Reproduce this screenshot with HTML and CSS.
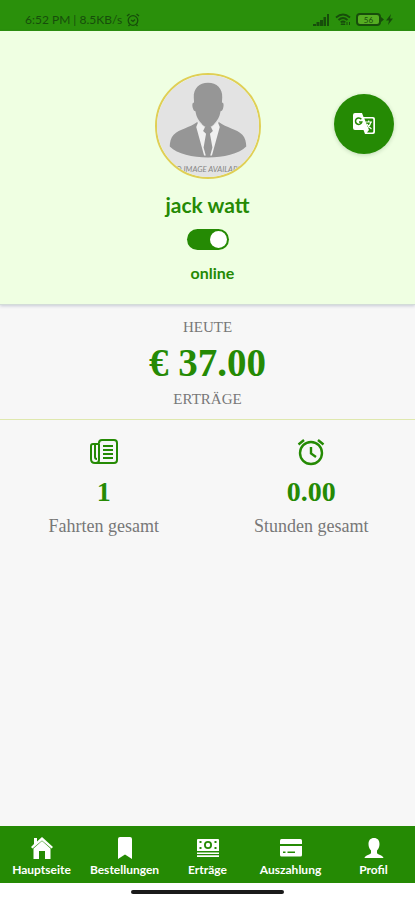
FILE: index.html
```html
<!DOCTYPE html>
<html lang="de">
<head>
  <meta charset="UTF-8">
  <meta name="viewport" content="width=device-width, initial-scale=1.0">
  <title>Hauptseite</title>
  <link rel="stylesheet" href="styles.css">
</head>
<body>
  <!-- Status bar -->
  <div class="status-bar">
    <div class="status-left">
      <span>6:52 PM | 8.5KB/s</span>
      <svg width="14" height="14" viewBox="0 0 14 14" fill="none" stroke="currentColor" stroke-width="1.3">
        <circle cx="7" cy="7.5" r="4.8"/>
        <path d="M1 3l2.5-2M13 3l-2.5-2M2.5 13l1.2-1.4M11.5 13l-1.2-1.4M5 7l2 1.5L9 6.5"/>
      </svg>
    </div>
    <div class="status-right">
      <svg width="17" height="12" viewBox="0 0 17 12" fill="currentColor">
        <path d="M0 10h3v2H0zM3.500 8h3v4h-3zM7 6h3v6H7zM10.500 3h2.500v9h-2.500zM14 0h2v12h-2z"/>
      </svg>
      <svg width="16" height="13" viewBox="0 0 16 13" fill="none" stroke="currentColor" stroke-width="1.8">
        <path d="M1 4.500q7-6 14 0M3.500 7q4.500-4 9 0M5.700 9.400q2.300-2 4.600 0"/>
        <path d="M8 9.500l2 2H6zM12 9v3M14.500 9v3" stroke-width="1"/>
      </svg>
      <svg width="38" height="13" viewBox="0 0 38 13">
        <rect x="1" y="1" width="23" height="11" rx="3" fill="#55ad22" stroke="currentColor" stroke-width="2"/>
        <path d="M25 4l3 2.500-3 2.500z" fill="currentColor"/>
        <text x="12.500" y="9.500" text-anchor="middle" class="battery-text">56</text>
        <path d="M35 1l-5 6.500h3L32 12l5-6.500h-3z" fill="currentColor"/>
      </svg>
    </div>
  </div>

  <!-- Driver profile -->
  <header class="profile">
    <svg class="avatar" viewBox="0 0 104 104" role="img" aria-label="jack watt">
      <rect width="104" height="104" fill="#e3e3e3"/>
      <path fill="#969696" d="M52 8c-9 0-15 6-14.500 15l.3 5c-2 0-2 3-1.200 6 .5 2 1.400 3 2.600 3 1 6 3 9 5.800 12 2 3 4.500 4.500 7 4.500s5-1.500 7-4.500c2.800-3 4.800-6 5.800-12 1.200 0 2.100-1 2.600-3 .8-3 .8-6-1.200-6l.3-5C67 14 61 8 52 8z"/>
      <path fill="#969696" d="M41 48C33 54 23 55 17 61c-3 3-4 8-4 12 8 8 23 11 39 11s31-3 39-11c0-4-1-9-4-12-6-6-16-7-24-13L52 65z"/>
      <path fill="#f0f0f0" d="M42 48l-2 5 8 29h8l8-29-2-5-10 9z"/>
      <path fill="#969696" d="M49 53h6l2 4-3 3 2.500 14L54 83h-4l-2.500-9L50 60l-3-3z"/>
      <text x="52" y="99" text-anchor="middle" class="avatar-text">NO IMAGE AVAILABLE</text>
    </svg>
    <h1 class="name">jack watt</h1>
    <input type="checkbox" class="switch" id="online" role="switch" checked>
    <label for="online" class="online">online</label>

    <button type="button" class="translate" aria-label="Sprache">
      <svg width="24" height="24" viewBox="0 0 24 24">
        <path fill="#fff" d="M3 1h7l1.500 4H21q2 0 2 2v13q0 2-2 2h-8l-1.500-4H3q-2 0-2-2V3q0-2 2-2z"/>
        <path fill="#258a04" d="M12.300 6.500H20q1.300 0 1.300 1.300v11.500q0 1.200-1.300 1.200h-5l2-2.500z"/>
        <path fill="none" stroke="#258a04" stroke-width="1.500" d="M9.300 7.300A3.200 3.200 0 1 0 9.800 10H7"/>
        <path fill="none" stroke="#fff" stroke-width="1.200" d="M13.500 10h6.500M16.700 8.500V10M19 10q-1 4-4 6M15 12q1.500 3 4.500 5"/>
      </svg>
    </button>
  </header>

  <main>
    <!-- Earnings today -->
    <section class="earnings">
      <div class="caption">HEUTE</div>
      <div class="amount">€ 37.00</div>
      <div class="caption">ERTRÄGE</div>
    </section>

    <section class="stats">
      <div class="stat">
        <svg width="30" height="28" viewBox="0 0 30 28" fill="none" stroke="currentColor" stroke-width="2" stroke-linejoin="round">
          <path d="M10 5q0-3 3-3h12q3 0 3 3v17q0 3-3 3H6q-4 0-4-4V8q0-2 2-2h6v16q0 3-3 3"/>
          <path d="M6 6v13q0 2 2 2M14 8h10M14 12h10M14 16h10M14 20h10"/>
        </svg>
        <div class="value">1</div>
        <div class="label">Fahrten gesamt</div>
      </div>
      <div class="stat">
        <svg width="30" height="28" viewBox="0 0 30 28" fill="none" stroke="currentColor" stroke-width="2.400">
          <circle cx="15" cy="15" r="11"/>
          <path d="M15 9v6.500l5 3.500M2.500 6.500L8 2M27.500 6.500L22 2"/>
        </svg>
        <div class="value">0.00</div>
        <div class="label">Stunden gesamt</div>
      </div>
    </section>
  </main>

  <!-- Bottom navigation -->
  <nav class="tabs">
    <a href="#">
      <svg width="24" height="24" viewBox="0 0 24 24" fill="currentColor">
        <path d="M12 1l11 10-1.500 1.500L12 4.500l-9.500 8L1 11l3-3V2h3v3.500z"/>
        <path d="M12 5l8.500 7.500V23H15v-8H9v8H3.500V12.500z"/>
      </svg>
      Hauptseite
    </a>
    <a href="#">
      <svg width="24" height="24" viewBox="0 0 24 24" fill="currentColor">
        <path d="M5 3q0-2 2-2h10q2 0 2 2v20l-7-4.500L5 23z"/>
      </svg>
      Bestellungen
    </a>
    <a href="#">
      <svg width="24" height="24" viewBox="0 0 24 24" fill="currentColor">
        <path fill-rule="evenodd" d="M2 3h20q1 0 1 1v11H1V4q0-1 1-1zM12 5a4 4 0 1 0 0 8 4 4 0 0 0 0-8zM3.500 5v2h2V5zM18.500 5v2h2V5zM3.500 11v2h2v-2zM18.500 11v2h2v-2z"/>
        <circle cx="12" cy="9" r="2.200"/>
        <path d="M1 16.500h22V18H1zM1 19.300h22V21H1z"/>
      </svg>
      Erträge
    </a>
    <a href="#">
      <svg width="24" height="24" viewBox="0 0 24 24" fill="currentColor">
        <path d="M2.500 3h19Q23 3 23 4.500V8H1V4.500Q1 3 2.500 3z"/>
        <path fill-rule="evenodd" d="M1 10h22v9q0 1.500-1.500 1.500h-19Q1 20.500 1 19zM4 15.500V17h2.500v-1.500zM8.500 15.500V17H16v-1.500z"/>
      </svg>
      Auszahlung
    </a>
    <a href="#">
      <svg width="24" height="24" viewBox="0 0 24 24" fill="currentColor">
        <path d="M12 2c-3.500 0-5.500 2.300-5.500 6 0 3 1 5 2.500 6.500V17c0 1.500-6 2-6.500 5h19c-.5-3-6.500-3.500-6.500-5v-2.500c1.500-1.500 2.500-3.500 2.500-6.500 0-3.700-2-6-5.500-6z"/>
      </svg>
      Profil
    </a>
  </nav>
  <div class="home-indicator"></div>
</body>
</html>
```
FILE: styles.css
```css
* {
  box-sizing: border-box;
}
body {
  margin: 0;
  min-height: 100vh;
  display: flex;
  flex-direction: column;
  background-color: #f7f7f7;
  color: #258a04;
  font-family: Lato, sans-serif;
}
.status-bar {
  display: flex;
  justify-content: space-between;
  height: 31px;
  padding: 8px 21px 0 25px;
  background-color: #2a900b;
  color: #174d0b;
}
.status-left, .status-right {
  display: flex;
  align-items: center;
  height: 23px;
  gap: 4px;
}
.status-left {
  font-size: 12px;
}
.status-right {
  gap: 5px;
}
.battery-text {
  font-size: 8px;
  fill: #174d0b;
}
.profile {
  position: relative;
  display: flex;
  flex-direction: column;
  align-items: center;
  padding: 42px 0 20px;
  background-color: #efffe2;
  border-bottom: 1px solid #d3dcd8;
  box-shadow: 0 1px 3px rgba(60, 70, 120, 0.25);
}
.avatar {
  width: 106px;
  height: 106px;
  border: 2px solid #e0cf55;
  border-radius: 50%;
}
.avatar-text {
  font-size: 8px;
  font-style: italic;
  fill: #858585;
}
.name {
  margin: 12px 0 10px;
  font-size: 21px;
  line-height: 28px;
}
.switch {
  appearance: none;
  width: 42px;
  height: 21px;
  margin: 0;
  padding: 2px;
  border-radius: 11px;
  background-color: #999;
  cursor: pointer;
}
.switch::before {
  content: "";
  display: block;
  width: 17px;
  height: 17px;
  border-radius: 50%;
  background-color: #fff;
}
.switch:checked {
  background-color: #258a04;
}
.switch:checked::before {
  margin-left: 21px;
}
.online {
  margin-top: 12px;
  padding-left: 10px;
  font-size: 16px;
  font-weight: bold;
  line-height: 22px;
}
.translate {
  position: absolute;
  top: 63px;
  right: 21px;
  display: flex;
  align-items: center;
  justify-content: center;
  width: 60px;
  height: 60px;
  padding: 0;
  border: none;
  border-radius: 50%;
  background-color: #258a04;
  box-shadow: 0 1px 4px rgba(0, 60, 0, 0.2);
  cursor: pointer;
}
main {
  flex: 1;
}
.earnings {
  padding: 12px 0 10px;
  border-bottom: 1px solid #dfe8ae;
  text-align: center;
}
.caption {
  color: #777;
  font-family: "Liberation Serif", serif;
  font-size: 15px;
  line-height: 20px;
}
.amount {
  font-family: "Liberation Serif", serif;
  font-size: 39px;
  font-weight: bold;
  line-height: 52px;
}
.stats {
  display: grid;
  grid-template-columns: 1fr 1fr;
  padding-top: 18px;
}
.stat {
  display: flex;
  flex-direction: column;
  align-items: center;
}
.value {
  margin: 10px 0 8px;
  font-family: "Liberation Serif", serif;
  font-size: 28px;
  font-weight: bold;
  line-height: 32px;
}
.label {
  color: #777;
  font-family: "Liberation Serif", serif;
  font-size: 18px;
  line-height: 20px;
}
.tabs {
  display: grid;
  grid-template-columns: repeat(5, 1fr);
  height: 57px;
  padding-top: 10px;
  background-color: #258a04;
}
.tabs a {
  display: flex;
  flex-direction: column;
  align-items: center;
  color: #fff;
  font-size: 12px;
  font-weight: bold;
  line-height: 20px;
  text-decoration: none;
}
.home-indicator {
  height: 17px;
  padding-top: 7px;
  background-color: #fff;
}
.home-indicator::before {
  content: "";
  display: block;
  width: 37%;
  height: 4px;
  margin: 0 auto;
  border-radius: 2px;
  background-color: #1a1a1a;
}
```
